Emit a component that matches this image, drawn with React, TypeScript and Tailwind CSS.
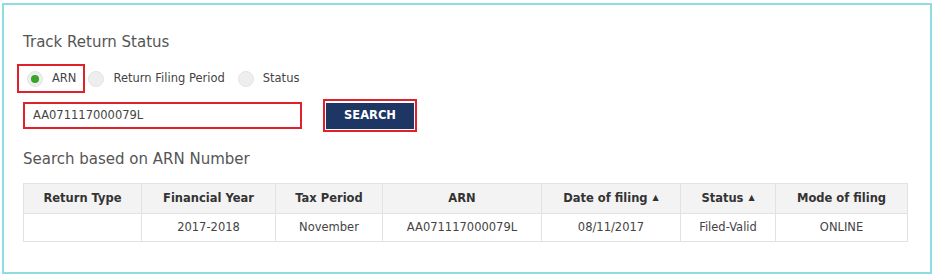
import { useState } from 'react';

type Column = { label: string; width: string; sortable?: boolean };

const columns: Column[] = [
  { label: 'Return Type', width: 'w-[118px]' },
  { label: 'Financial Year', width: 'w-[134px]' },
  { label: 'Tax Period', width: 'w-[107px]' },
  { label: 'ARN', width: 'w-[159px]' },
  { label: 'Date of filing', width: 'w-[139px]', sortable: true },
  { label: 'Status', width: 'w-[95px]', sortable: true },
  { label: 'Mode of filing', width: 'w-[132px]' },
];

const rows = [['', '2017-2018', 'November', 'AA071117000079L', '08/11/2017', 'Filed-Valid', 'ONLINE']];

function Radio({ checked, label, onClick }: { checked: boolean; label: string; onClick: () => void }) {
  return (
    <button type="button" onClick={onClick} className="flex items-center gap-[9px]">
      <span className="flex h-4 w-4 items-center justify-center rounded-full border border-[#e4e4e4] bg-[#eeeeee]">
        {checked && <span className="h-2 w-2 rounded-full bg-[#3aa32a]" />}
      </span>
      <span className="text-[11.5px] text-[#444]">{label}</span>
    </button>
  );
}

export default function App() {
  const [mode, setMode] = useState('arn');
  const [arn, setArn] = useState('AA071117000079L');

  return (
    <div className="h-[277px] w-[937px] bg-white pl-[2px] pt-[3px] font-['DejaVu_Sans',Verdana,sans-serif]">
      <div className="h-[271px] w-[930px] border-2 border-[#8fdde3] px-[19px] pt-[28px]">
        <h2 className="text-[15px] leading-[18px] text-[#555]">Track Return Status</h2>

        <div className="mt-[13px] flex items-center">
          <div className="-ml-[6px] flex h-[29px] items-center border-2 border-[#e0212b] pl-[8px] pr-[7px]">
            <Radio checked={mode === 'arn'} label="ARN" onClick={() => setMode('arn')} />
          </div>
          <div className="ml-[3px] mr-[13px]">
            <Radio checked={mode === 'period'} label="Return Filing Period" onClick={() => setMode('period')} />
          </div>
          <Radio checked={mode === 'status'} label="Status" onClick={() => setMode('status')} />
        </div>

        <div className="mt-[6px] flex items-center gap-[21px]">
          <input
            value={arn}
            onChange={(e) => setArn(e.target.value)}
            className="h-[27px] w-[279px] border-2 border-[#e0212b] px-[8px] text-[11.5px] text-[#444] outline-none"
          />
          <div className="border-2 border-[#e0212b] p-px">
            <button type="button" className="h-[26px] w-[88px] bg-[#1d3664] text-[11.5px] font-bold text-white">
              SEARCH
            </button>
          </div>
        </div>

        <h3 className="mt-[18px] text-[15px] leading-[18px] text-[#555]">Search based on ARN Number</h3>

        <table className="mt-[15px] w-[884px] table-fixed border-collapse text-[11.5px]">
          <thead>
            <tr className="h-[30px] bg-[#f3f3f3]">
              {columns.map((c) => (
                <th key={c.label} className={`${c.width} border border-[#e2e2e2] font-bold text-[#333]`}>
                  {c.label}
                  {c.sortable && <span className="ml-[5px] align-middle text-[8px]">▲</span>}
                </th>
              ))}
            </tr>
          </thead>
          <tbody>
            {rows.map((r, i) => (
              <tr key={i} className="h-[28px]">
                {r.map((cell, j) => (
                  <td key={j} className="border border-[#e2e2e2] text-center text-[#444]">
                    {cell}
                  </td>
                ))}
              </tr>
            ))}
          </tbody>
        </table>
      </div>
    </div>
  );
}
